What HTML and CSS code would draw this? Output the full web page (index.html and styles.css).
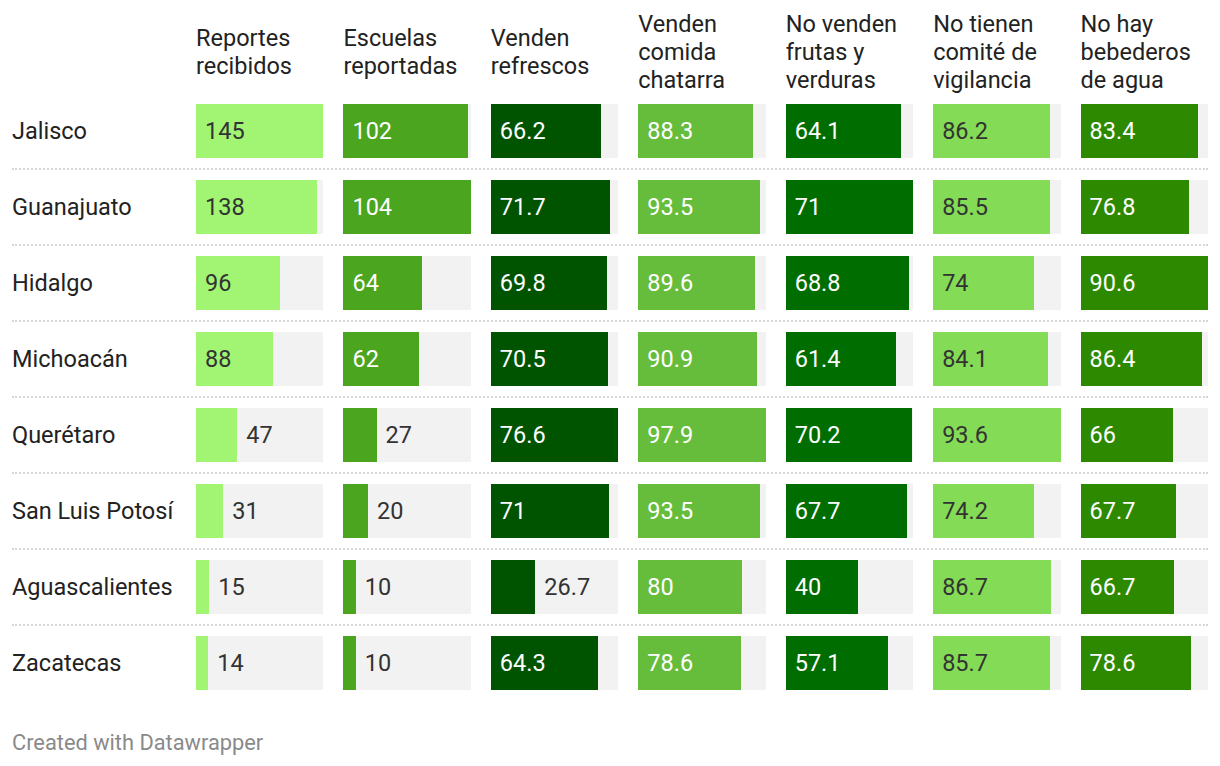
FILE: index.html
```html
<!DOCTYPE html>
<html lang="es">
<head>
<meta charset="utf-8">
<title>Reportes por estado</title>
<link rel="stylesheet" href="styles.css">
</head>
<body>
<div class="chart">
  <div class="row head">
    <div class="th"></div>
    <div class="th">Reportes<br>recibidos</div>
    <div class="th">Escuelas<br>reportadas</div>
    <div class="th">Venden<br>refrescos</div>
    <div class="th">Venden<br>comida<br>chatarra</div>
    <div class="th">No venden<br>frutas y<br>verduras</div>
    <div class="th">No tienen<br>comité de<br>vigilancia</div>
    <div class="th">No hay<br>bebederos<br>de agua</div>
  </div>

  <div class="row">
    <div class="name">Jalisco</div>
    <div class="track"><div class="bar c1" style="width:100%"><span>145</span></div></div>
    <div class="track"><div class="bar c2" style="width:98.08%"><span>102</span></div></div>
    <div class="track"><div class="bar c3" style="width:86.42%"><span>66.2</span></div></div>
    <div class="track"><div class="bar c4" style="width:90.19%"><span>88.3</span></div></div>
    <div class="track"><div class="bar c5" style="width:90.28%"><span>64.1</span></div></div>
    <div class="track"><div class="bar c6" style="width:92.09%"><span>86.2</span></div></div>
    <div class="track"><div class="bar c7" style="width:92.05%"><span>83.4</span></div></div>
  </div>

  <div class="row">
    <div class="name">Guanajuato</div>
    <div class="track"><div class="bar c1" style="width:95.17%"><span>138</span></div></div>
    <div class="track"><div class="bar c2" style="width:100%"><span>104</span></div></div>
    <div class="track"><div class="bar c3" style="width:93.6%"><span>71.7</span></div></div>
    <div class="track"><div class="bar c4" style="width:95.51%"><span>93.5</span></div></div>
    <div class="track"><div class="bar c5" style="width:100%"><span>71</span></div></div>
    <div class="track"><div class="bar c6" style="width:91.35%"><span>85.5</span></div></div>
    <div class="track"><div class="bar c7" style="width:84.77%"><span>76.8</span></div></div>
  </div>

  <div class="row">
    <div class="name">Hidalgo</div>
    <div class="track"><div class="bar c1" style="width:66.21%"><span>96</span></div></div>
    <div class="track"><div class="bar c2" style="width:61.54%"><span>64</span></div></div>
    <div class="track"><div class="bar c3" style="width:91.12%"><span>69.8</span></div></div>
    <div class="track"><div class="bar c4" style="width:91.52%"><span>89.6</span></div></div>
    <div class="track"><div class="bar c5" style="width:96.9%"><span>68.8</span></div></div>
    <div class="track"><div class="bar c6" style="width:79.06%"><span>74</span></div></div>
    <div class="track"><div class="bar c7" style="width:100%"><span>90.6</span></div></div>
  </div>

  <div class="row">
    <div class="name">Michoacán</div>
    <div class="track"><div class="bar c1" style="width:60.69%"><span>88</span></div></div>
    <div class="track"><div class="bar c2" style="width:59.62%"><span>62</span></div></div>
    <div class="track"><div class="bar c3" style="width:92.04%"><span>70.5</span></div></div>
    <div class="track"><div class="bar c4" style="width:92.85%"><span>90.9</span></div></div>
    <div class="track"><div class="bar c5" style="width:86.48%"><span>61.4</span></div></div>
    <div class="track"><div class="bar c6" style="width:89.85%"><span>84.1</span></div></div>
    <div class="track"><div class="bar c7" style="width:95.36%"><span>86.4</span></div></div>
  </div>

  <div class="row">
    <div class="name">Querétaro</div>
    <div class="track"><div class="bar c1" style="width:32.41%"></div><span class="out">47</span></div>
    <div class="track"><div class="bar c2" style="width:25.96%"></div><span class="out">27</span></div>
    <div class="track"><div class="bar c3" style="width:100%"><span>76.6</span></div></div>
    <div class="track"><div class="bar c4" style="width:100%"><span>97.9</span></div></div>
    <div class="track"><div class="bar c5" style="width:98.87%"><span>70.2</span></div></div>
    <div class="track"><div class="bar c6" style="width:100%"><span>93.6</span></div></div>
    <div class="track"><div class="bar c7" style="width:72.85%"><span>66</span></div></div>
  </div>

  <div class="row">
    <div class="name">San Luis Potosí</div>
    <div class="track"><div class="bar c1" style="width:21.38%"></div><span class="out">31</span></div>
    <div class="track"><div class="bar c2" style="width:19.23%"></div><span class="out">20</span></div>
    <div class="track"><div class="bar c3" style="width:92.69%"><span>71</span></div></div>
    <div class="track"><div class="bar c4" style="width:95.51%"><span>93.5</span></div></div>
    <div class="track"><div class="bar c5" style="width:95.35%"><span>67.7</span></div></div>
    <div class="track"><div class="bar c6" style="width:79.27%"><span>74.2</span></div></div>
    <div class="track"><div class="bar c7" style="width:74.72%"><span>67.7</span></div></div>
  </div>

  <div class="row">
    <div class="name">Aguascalientes</div>
    <div class="track"><div class="bar c1" style="width:10.34%"></div><span class="out">15</span></div>
    <div class="track"><div class="bar c2" style="width:9.62%"></div><span class="out">10</span></div>
    <div class="track"><div class="bar c3" style="width:34.86%"></div><span class="out">26.7</span></div>
    <div class="track"><div class="bar c4" style="width:81.72%"><span>80</span></div></div>
    <div class="track"><div class="bar c5" style="width:56.34%"><span>40</span></div></div>
    <div class="track"><div class="bar c6" style="width:92.63%"><span>86.7</span></div></div>
    <div class="track"><div class="bar c7" style="width:73.62%"><span>66.7</span></div></div>
  </div>

  <div class="row last">
    <div class="name">Zacatecas</div>
    <div class="track"><div class="bar c1" style="width:9.66%"></div><span class="out">14</span></div>
    <div class="track"><div class="bar c2" style="width:9.62%"></div><span class="out">10</span></div>
    <div class="track"><div class="bar c3" style="width:83.94%"><span>64.3</span></div></div>
    <div class="track"><div class="bar c4" style="width:80.29%"><span>78.6</span></div></div>
    <div class="track"><div class="bar c5" style="width:80.42%"><span>57.1</span></div></div>
    <div class="track"><div class="bar c6" style="width:91.56%"><span>85.7</span></div></div>
    <div class="track"><div class="bar c7" style="width:86.75%"><span>78.6</span></div></div>
  </div>

  <div class="footer">Created with Datawrapper</div>
</div>
</body>
</html>
```

FILE: styles.css
```css
* {
  box-sizing: border-box;
}

html, body {
  margin: 0;
  padding: 0;
  background: #ffffff;
}

body {
  font-family: Roboto, "Liberation Sans", Arial, sans-serif;
  font-size: 23.5px;
  color: #333333;
}

.chart {
  padding: 10px 12px 0 12px;
}

.row {
  display: grid;
  grid-template-columns: 164px repeat(7, 1fr);
  column-gap: 20px;
  align-items: center;
  padding: 10px 0 10px 0;
  border-bottom: 2px dotted #d6d6d6;
}

.row.head {
  padding: 0;
  border-bottom: none;
  height: 84px;
}

.row.last {
  border-bottom: none;
}

.th {
  line-height: 28px;
  white-space: nowrap;
  color: #222222;
}

.name {
  line-height: 28px;
  white-space: nowrap;
  color: #222222;
}

.track {
  display: flex;
  align-items: center;
  height: 54px;
  background: #f2f2f2;
  line-height: 28px;
}

.bar {
  height: 100%;
  display: flex;
  align-items: center;
  padding-left: 9px;
  white-space: nowrap;
  flex: none;
}

.out {
  margin-left: 9px;
  color: #333333;
  white-space: nowrap;
}

.c1 { background: #a1f573; color: #333333; }
.c2 { background: #4ba51e; color: #ffffff; }
.c3 { background: #005400; color: #ffffff; }
.c4 { background: #66bd3c; color: #ffffff; }
.c5 { background: #006d00; color: #ffffff; }
.c6 { background: #84dc56; color: #333333; }
.c7 { background: #2d8a00; color: #ffffff; }

.footer {
  margin-top: 30px;
  font-size: 21.8px;
  line-height: 26px;
  color: #8a8a8a;
}
```
